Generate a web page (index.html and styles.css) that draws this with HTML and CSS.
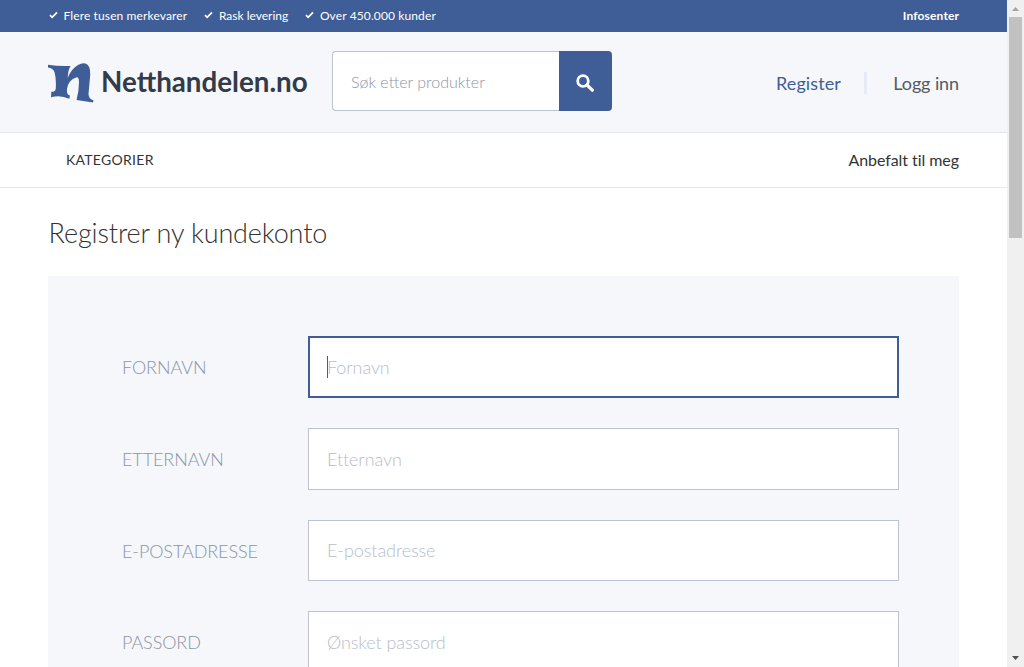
FILE: index.html
```html
<!DOCTYPE html>
<html lang="no">
<head>
<meta charset="utf-8">
<title>Registrer ny kundekonto</title>
<link rel="stylesheet" href="styles.css">
</head>
<body>
<div class="page">
  <div class="topbar">
    <ul class="usps">
      <li class="usp"><svg class="check" viewBox="0 0 9 8"><path d="M1 4.200 3.200 6.300 8 1.300" fill="none" stroke="#fff" stroke-width="1.700"/></svg><span class="wide">Flere tusen merkevarer</span></li>
      <li class="usp"><svg class="check" viewBox="0 0 9 8"><path d="M1 4.200 3.200 6.300 8 1.300" fill="none" stroke="#fff" stroke-width="1.700"/></svg><span>Rask levering</span></li>
      <li class="usp"><svg class="check" viewBox="0 0 9 8"><path d="M1 4.200 3.200 6.300 8 1.300" fill="none" stroke="#fff" stroke-width="1.700"/></svg><span class="wide">Over 450.000 kunder</span></li>
    </ul>
    <a class="info">Infosenter</a>
  </div>
  <header class="header">
    <a class="logo">
      <svg class="mark" viewBox="0 0 46 40"><path d="M0 1.800 Q11 3.500 22.500 3 Q20 7 19.700 15 Q23 6 30 2 Q34 -.3 37.500 .5 Q42.500 2 42.200 12 L40.500 31 Q40.500 36 45.500 37.300 L45 39.500 Q37 38 28.500 37 Q31 28 31 19 Q31 13.500 28 14.500 Q20 17.500 19 26 Q18.500 32 22 32.500 L21.300 35.700 Q12 31.500 3 34.300 L3.300 28.800 Q7.300 29 7.700 26 Q8.500 16 6.500 9 Q5 5 0 4.500 Z" fill="#3f5d97"/></svg>
      <span class="brand">Netthandelen.no</span>
    </a>
    <form class="search">
      <input class="search-input" type="text" placeholder="Søk etter produkter">
      <button class="search-button" type="button" aria-label="Søk"><svg class="glass" viewBox="0 0 18 18"><circle cx="7" cy="7" r="5.300" fill="none" stroke="#fff" stroke-width="2.800"/><path d="M11 11 16.300 16.200" stroke="#fff" stroke-width="3.200" stroke-linecap="round"/></svg></button>
    </form>
    <nav class="account">
      <a class="register">Register</a>
      <a class="login">Logg inn</a>
    </nav>
  </header>
  <nav class="menu">
    <a class="categories">KATEGORIER</a>
    <a class="recommended">Anbefalt til meg</a>
  </nav>
  <main class="main">
    <h1 class="title">Registrer ny kundekonto</h1>
    <form class="panel">
      <label class="row"><span class="label">FORNAVN</span><span class="field"><input class="input focused" type="text" placeholder="Fornavn"><i class="caret"></i></span></label>
      <label class="row"><span class="label">ETTERNAVN</span><span class="field"><input class="input" type="text" placeholder="Etternavn"></span></label>
      <label class="row"><span class="label">E-POSTADRESSE</span><span class="field"><input class="input" type="text" placeholder="E-postadresse"></span></label>
      <label class="row"><span class="label">PASSORD</span><span class="field"><input class="input" type="text" placeholder="Ønsket passord"></span></label>
    </form>
  </main>
</div>
<div class="scrollbar">
  <svg class="arrow" viewBox="0 0 17 17"><path d="M5 11 8.500 7 12 11Z" fill="#a3a3a3"/></svg>
  <div class="thumb"></div>
  <svg class="arrow down" viewBox="0 0 17 17"><path d="M5 6 12 6 8.500 10Z" fill="#505050"/></svg>
</div>
</body>
</html>
```
FILE: styles.css
```css
* { box-sizing: border-box; }
body {
  margin: 0;
  display: flex;
  height: 667px;
  overflow: hidden;
  font-family: Lato, "Open Sans", sans-serif;
  background: #fff;
}
.page { width: 1007px; height: 667px; overflow: hidden; }
.topbar {
  height: 32px;
  padding: 0 48px 2px;
  display: flex;
  justify-content: space-between;
  align-items: center;
  background: #3f5d97;
  color: #fff;
  font-size: 12px;
}
.usps { display: flex; gap: 17.2px; margin: 0; padding: 0 0 0 1px; list-style: none; }
.usp { display: flex; align-items: center; gap: 5.5px; }
.wide { letter-spacing: 0.12px; }
.check { width: 9px; height: 8px; }
.info { font-weight: 700; letter-spacing: 0.15px; margin-right: -0.15px; }
.header {
  height: 101px;
  padding: 19px 48px 0;
  display: flex;
  align-items: flex-start;
  background: #f5f7fb;
  border-bottom: 1px solid #e4e7ec;
}
.logo { display: flex; width: 284px; padding-top: 12px; }
.mark { width: 46px; height: 40px; }
.brand {
  margin: 1px 0 0 7px;
  font-size: 27.75px;
  line-height: 36px;
  font-weight: 700;
  color: #343b46;
}
.search { display: flex; width: 280px; height: 60px; }
.search-input {
  width: 227px;
  padding: 0 18px 0;
  border: 1px solid #bcc3d1;
  border-right: 0;
  border-radius: 4px 0 0 4px;
  background: #fff;
  font: 300 16px Lato, sans-serif;
}
.search-input::placeholder { color: #8b94a8; opacity: 1; }
.search-button {
  width: 53px;
  padding: 3px 2px 0 0;
  border: 0;
  border-radius: 0 4px 4px 0;
  background: #3f5d97;
}
.glass { width: 18px; height: 18px; display: block; margin: 0 auto; }
.account { display: flex; margin-left: auto; padding-top: 21px; font-size: 18px; line-height: 22px; }
.register { padding-right: 23px; border-right: 3px solid #e6eaf4; color: #3f5d97; letter-spacing: 0.1px; }
.login { padding-left: 26.4px; color: #555a63; letter-spacing: -0.1px; }
.menu {
  height: 55px;
  padding: 0 48px 2px 66px;
  display: flex;
  justify-content: space-between;
  align-items: center;
  border-bottom: 1px solid #e6e6e6;
  color: #333;
}
.categories { font-size: 14px; letter-spacing: 0.28px; }
.recommended { font-size: 16px; font-variant-ligatures: none; letter-spacing: -0.06px; }
.main { padding: 0 48px; }
.title {
  margin: 0;
  height: 88px;
  padding: 28px 0 0 0.6px;
  font-size: 27px;
  line-height: 34px;
  font-weight: 300;
  letter-spacing: -0.13px;
  color: #333;
}
.panel {
  height: 500px;
  padding: 60.4px 60px 0 74px;
  display: flex;
  flex-direction: column;
  gap: 30px;
  background: #f5f7fb;
}
.row { display: flex; align-items: center; height: 61.6px; flex: none; }
.label { width: 186px; padding-top: 0.4px; font-size: 18px; font-weight: 300; letter-spacing: -0.1px; color: #8b94a8; }
.field { position: relative; width: 591px; height: 61.6px; }
.input {
  display: block;
  width: 591px;
  height: 61.6px;
  padding: 0 18px;
  border: 1px solid #bcc3d1;
  background: #fff;
  font: 300 18px Lato, sans-serif;
  letter-spacing: -0.08px;
}
.input::placeholder { color: #b7bdca; opacity: 1; }
.focused { border: 2px solid #3f5d97; padding: 0 17px; }
.caret { position: absolute; left: 19px; top: 20px; width: 1px; height: 22px; background: #3f5d97; }
.scrollbar { width: 17px; height: 667px; display: flex; flex-direction: column; align-items: center; background: #f0f0f0; }
.arrow { width: 17px; height: 17px; }
.thumb { width: 13px; height: 221px; background: #c1c1c1; }
.down { margin-top: auto; }
```
